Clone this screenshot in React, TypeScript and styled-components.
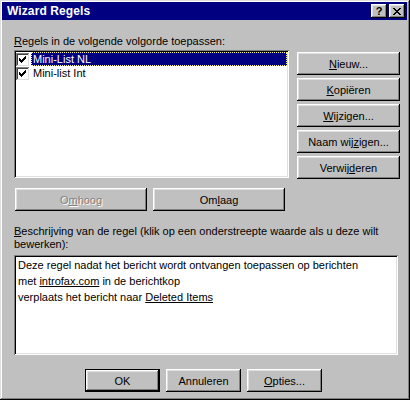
import styled, { createGlobalStyle, css } from 'styled-components';

const GlobalStyle = createGlobalStyle`
  html, body {
    margin: 0;
    padding: 0;
    background: #c0c0c0;
  }
  body {
    font-family: "Liberation Sans", Arial, sans-serif;
    font-size: 11px;
    color: #000;
  }
`;

const raised = css`
  background: #c0c0c0;
  box-shadow: inset -1px -1px #000, inset 1px 1px #fff, inset -2px -2px #808080,
    inset 2px 2px #dfdfdf;
`;

const sunken = css`
  background: #fff;
  box-shadow: inset 1px 1px #808080, inset -1px -1px #fff, inset 2px 2px #000,
    inset -2px -2px #dfdfdf;
`;

const Window = styled.div`
  width: 410px;
  height: 400px;
  box-sizing: border-box;
  padding: 2px 3px 3px 2px;
  background: #c0c0c0;
  box-shadow: inset -1px -1px #000, inset 1px 1px #dfdfdf, inset -2px -2px #808080,
    inset 2px 2px #fff;
  display: flex;
  flex-direction: column;
`;

const TitleBar = styled.div`
  height: 18px;
  background: #000080;
  color: #fff;
  display: flex;
  align-items: center;
  padding: 0 2px 0 5px;
`;

const TitleText = styled.div`
  flex: 1;
  font-weight: bold;
  font-size: 12px;
  letter-spacing: 0.1px;
`;

const CaptionButton = styled.div<{ $gap?: number }>`
  ${raised};
  width: 16px;
  height: 14px;
  margin-left: ${(p) => p.$gap ?? 0}px;
  display: flex;
  align-items: center;
  justify-content: center;
  color: #000;
  font-weight: bold;
  font-size: 11px;
  line-height: 14px;
`;

const Body = styled.div`
  display: flex;
  flex-direction: column;
  padding: 0 7px 0 12px;
`;

const Label = styled.div<{ $top: number }>`
  line-height: 13px;
  margin-top: ${(p) => p.$top}px;
  white-space: nowrap;
`;

const Key = styled.span`
  text-decoration: underline;
`;

const TopGrid = styled.div`
  display: grid;
  grid-template-columns: 275px 103px;
  column-gap: 8px;
  margin-top: 2px;
`;

const ListBox = styled.div`
  ${sunken};
  height: 128px;
  box-sizing: border-box;
  padding: 2px;
  display: flex;
  flex-direction: column;
`;

const ListRow = styled.div`
  height: 14px;
  display: flex;
  align-items: center;
  svg {
    display: block;
    flex: none;
    margin-right: 2px;
  }
`;

const ItemLabel = styled.div<{ $selected?: boolean }>`
  flex: 1;
  height: 14px;
  line-height: 14px;
  padding-left: 2px;
  box-sizing: border-box;
  ${(p) =>
    p.$selected &&
    css`
      background: #000080;
      color: #fff;
      outline: 1px dotted #ffff80;
      outline-offset: -1px;
    `}
`;

const SideButtons = styled.div`
  display: flex;
  flex-direction: column;
  gap: 3px;
  margin-top: 2px;
`;

const Button = styled.button<{ $w?: number; $default?: boolean }>`
  ${raised};
  ${(p) =>
    p.$default &&
    css`
      box-shadow: inset 0 0 0 1px #000, inset -2px -2px #000, inset 2px 2px #fff,
        inset -3px -3px #808080, inset 3px 3px #dfdfdf;
    `}
  width: ${(p) => (p.$w ? `${p.$w}px` : '100%')};
  height: 23px;
  border: none;
  padding: 0;
  margin: 0;
  font-family: "Liberation Sans", Arial, sans-serif;
  font-size: 11px;
  color: #000;
  cursor: default;
  &:disabled {
    color: #808080;
    text-shadow: 1px 1px #fff;
  }
`;

const MoveRow = styled.div`
  display: flex;
  gap: 6px;
  margin-top: 9px;
  padding-left: 1px;
`;

const DescBox = styled.div`
  ${sunken};
  width: 384px;
  height: 100px;
  box-sizing: border-box;
  margin-top: 4px;
  padding: 2px 4px;
  line-height: 16px;
  white-space: nowrap;
`;

const Link = styled.span`
  text-decoration: underline;
`;

const Footer = styled.div`
  display: flex;
  justify-content: center;
  gap: 6px;
  margin-top: 14px;
  margin-left: -7px;
`;

// listview state image: checked box
const CheckedBox = () => (
  <svg width="13" height="13" viewBox="0 0 13 13" shapeRendering="crispEdges">
    <rect x="0" y="0" width="13" height="13" fill="#808080" />
    <rect x="1" y="1" width="12" height="12" fill="#404040" />
    <rect x="1" y="12" width="12" height="1" fill="#dfdfdf" />
    <rect x="12" y="1" width="1" height="12" fill="#dfdfdf" />
    <rect x="2" y="2" width="10" height="10" fill="#fff" />
    <path
      d="M3 5h1v3H3z M4 6h1v3H4z M5 7h1v3H5z M6 6h1v3H6z M7 5h1v3H7z M8 4h1v3H8z M9 3h1v3H9z"
      fill="#000"
    />
  </svg>
);

const rules = [
  { name: 'Mini-List NL', selected: true },
  { name: 'Mini-list Int', selected: false },
];

const App = () => {
  return (
    <>
      <GlobalStyle />
      <Window>
        <TitleBar>
          <TitleText>Wizard Regels</TitleText>
          <CaptionButton>?</CaptionButton>
          <CaptionButton $gap={2}>
            <svg width="8" height="7" viewBox="0 0 8 7">
              <path
                d="M0 0h2v1H0z M6 0h2v1H6z M1 1h2v1H1z M5 1h2v1H5z M2 2h4v1H2z M3 3h2v1H3z M2 4h4v1H2z M1 5h2v1H1z M5 5h2v1H5z M0 6h2v1H0z M6 6h2v1H6z"
                fill="#000"
              />
            </svg>
          </CaptionButton>
        </TitleBar>
        <Body>
          <Label $top={15}>
            <Key>R</Key>egels in de volgende volgorde toepassen:
          </Label>
          <TopGrid>
            <ListBox>
              {rules.map((r) => (
                <ListRow key={r.name}>
                  <CheckedBox />
                  <ItemLabel $selected={r.selected}>{r.name}</ItemLabel>
                </ListRow>
              ))}
            </ListBox>
            <SideButtons>
              <Button>
                <Key>N</Key>ieuw...
              </Button>
              <Button>
                <Key>K</Key>opiëren
              </Button>
              <Button>
                <Key>W</Key>ijzigen...
              </Button>
              <Button>
                Naam wij<Key>z</Key>igen...
              </Button>
              <Button>
                Verwij<Key>d</Key>eren
              </Button>
            </SideButtons>
          </TopGrid>
          <MoveRow>
            <Button $w={132} disabled>
              O<Key>m</Key>hoog
            </Button>
            <Button $w={132}>
              Om<Key>l</Key>aag
            </Button>
          </MoveRow>
          <Label $top={14}>
            <Key>B</Key>eschrijving van de regel (klik op een onderstreepte waarde als u deze wilt
            <br />
            bewerken):
          </Label>
          <DescBox>
            Deze regel nadat het bericht wordt ontvangen toepassen op berichten
            <br />
            met <Link>introfax.com</Link> in de berichtkop
            <br />
            verplaats het bericht naar <Link>Deleted Items</Link>
          </DescBox>
          <Footer>
            <Button $w={75} $default>
              OK
            </Button>
            <Button $w={75}>Annuleren</Button>
            <Button $w={75}>
              <Key>O</Key>pties...
            </Button>
          </Footer>
        </Body>
      </Window>
    </>
  );
};

export default App;
